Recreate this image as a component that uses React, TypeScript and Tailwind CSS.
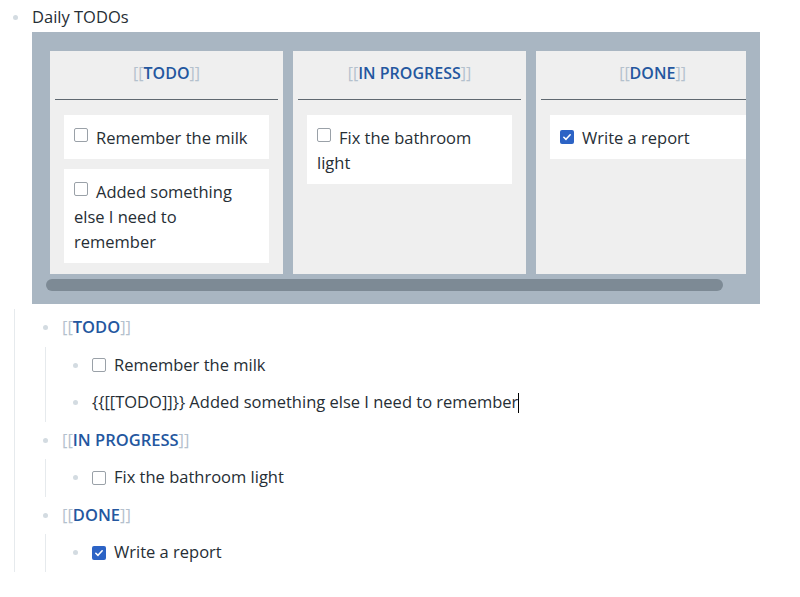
import type { ReactNode } from 'react';

type Card = { text: string; done?: boolean };
type Column = { title: string; cards: Card[] };

const COLUMNS: Column[] = [
  {
    title: 'TODO',
    cards: [{ text: 'Remember the milk' }, { text: 'Added something else I need to remember' }],
  },
  { title: 'IN PROGRESS', cards: [{ text: 'Fix the bathroom light' }] },
  { title: 'DONE', cards: [{ text: 'Write a report', done: true }] },
];

function Checkbox({ checked }: { checked?: boolean }) {
  if (checked) {
    return (
      <span className="w-[14px] h-[14px] inline-flex items-center justify-center rounded-[2px] bg-[#2c63c5] shrink-0">
        <svg viewBox="0 0 12 12" className="w-[10px] h-[10px]">
          <path d="M2.2 6.3 4.8 8.8 9.8 3.4" fill="none" stroke="white" strokeWidth="1.9" strokeLinecap="round" strokeLinejoin="round" />
        </svg>
      </span>
    );
  }
  return <span className="w-[14px] h-[14px] inline-block rounded-[2px] border border-[#9aa1a8] bg-white shrink-0" />;
}

function PageRef({ name }: { name: string }) {
  return (
    <span>
      <span className="text-[#b4c1cd]">[[</span>
      <span className="font-semibold text-[#24579f]">{name}</span>
      <span className="text-[#b4c1cd]">]]</span>
    </span>
  );
}

function Bullet() {
  return (
    <span className="w-[20px] h-full flex items-center justify-center shrink-0">
      <span className="w-[5px] h-[5px] rounded-full bg-[#d3dbe1]" />
    </span>
  );
}

function Row({ children }: { children: ReactNode }) {
  return (
    <div className="h-[37.5px] flex items-center">
      <Bullet />
      <div className="ml-[7px] flex items-center">{children}</div>
    </div>
  );
}

function Board() {
  return (
    <div className="ml-[32px] w-[728px] h-[272px] bg-[#a9b6c2] pt-[19px] pl-[18px]">
      <div className="w-[696px] overflow-hidden">
        <div className="flex gap-[10px] w-max">
          {COLUMNS.map((col) => (
            <div key={col.title} className="w-[233px] h-[223px] bg-[#efefef] px-[5px]">
              <div className="h-[49px] flex items-center justify-center border-b border-[#5f6870] pb-[5px] text-[16px]">
                <PageRef name={col.title} />
              </div>
              <div className="px-[9px] pt-[15px] flex flex-col gap-[10px]">
                {col.cards.map((card) => (
                  <div key={card.text} className="bg-white px-[10px] pt-[8px] pb-[9px] leading-[25px]">
                    <span className="inline-block align-[2px] mr-[8px]">
                      <Checkbox checked={card.done} />
                    </span>
                    {card.text}
                  </div>
                ))}
              </div>
            </div>
          ))}
        </div>
      </div>
      <div className="mt-[5px] ml-[-4px] w-[677px] h-[12px] rounded-full bg-[#7d8a95]" />
    </div>
  );
}

export default function App() {
  return (
    <div className="w-[800px] h-[597px] bg-white text-[16.5px] text-[#262e35] font-['Open_Sans',sans-serif] overflow-hidden">
      <div className="h-[32px] pl-[5px] flex items-center pt-[3px]">
        <Bullet />
        <span className="ml-[7px]">Daily TODOs</span>
      </div>
      <Board />

      <div className="mt-[5px] ml-[14px] border-l border-[#e6eaed] pl-[20px] w-max">
        <Row>
          <PageRef name="TODO" />
        </Row>
        <div className="ml-[10px] border-l border-[#e6eaed] pl-[19px]">
          <Row>
            <Checkbox />
            <span className="ml-[8px]">Remember the milk</span>
          </Row>
          <Row>
            <span>{'{{[[TODO]]}}'} Added something else I need to remember</span>
            <span className="inline-block w-[1px] h-[20px] bg-black" />
          </Row>
        </div>
        <Row>
          <PageRef name="IN PROGRESS" />
        </Row>
        <div className="ml-[10px] border-l border-[#e6eaed] pl-[19px]">
          <Row>
            <Checkbox />
            <span className="ml-[8px]">Fix the bathroom light</span>
          </Row>
        </div>
        <Row>
          <PageRef name="DONE" />
        </Row>
        <div className="ml-[10px] border-l border-[#e6eaed] pl-[19px]">
          <Row>
            <Checkbox checked />
            <span className="ml-[8px]">Write a report</span>
          </Row>
        </div>
      </div>
    </div>
  );
}
